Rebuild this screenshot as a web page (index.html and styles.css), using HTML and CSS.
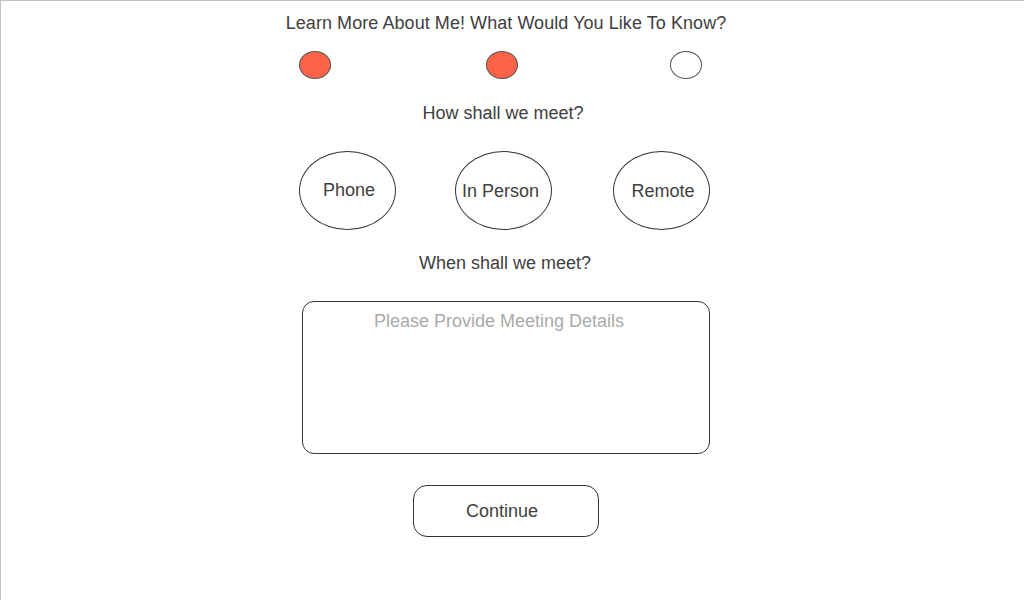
FILE: index.html
```html
<!DOCTYPE html>
<html>
<head>
<meta charset="utf-8">
<link rel="stylesheet" href="styles.css">
</head>
<body>
<div class="page">
  <div class="content">
    <h1 class="title">Learn More About Me! What Would You Like To Know?</h1>
    <div class="dots">
      <span class="dot dot-on"></span>
      <span class="dot dot-on dot-2"></span>
      <span class="dot dot-3"></span>
    </div>
    <p class="label label-how">How shall we meet?</p>
    <div class="options">
      <button class="option opt-phone">Phone</button>
      <button class="option opt-person">In Person</button>
      <button class="option opt-remote">Remote</button>
    </div>
    <p class="label label-when">When shall we meet?</p>
    <textarea class="details" placeholder="Please Provide Meeting Details"></textarea>
    <button class="continue">Continue</button>
  </div>
</div>
</body>
</html>
```
FILE: styles.css
```css
* { box-sizing: border-box; }
html, body { margin: 0; padding: 0; background: #fff; }
body { font-family: "Liberation Sans", Arial, sans-serif; color: #404040; }
.page {
  width: 1024px;
  height: 600px;
  border-top: 1px solid #c4c4c4;
  border-left: 1px solid #c4c4c4;
  overflow: hidden;
}
.content {
  width: 412px;
  margin-left: 298px;
  display: flex;
  flex-direction: column;
  align-items: stretch;
}
.title {
  margin: 11px -30px 0 -28px;
  font-size: 18px;
  font-weight: normal;
  line-height: 22px;
  letter-spacing: 0.06px;
  text-align: center;
  white-space: nowrap;
}
.dots {
  display: flex;
  margin-top: 17px;
  height: 28px;
}
.dot {
  width: 32px;
  height: 28px;
  border: 1px solid #555;
  border-radius: 50%;
  background: #fff;
}
.dot-on { background: #ff6347; }
.dot-2 { margin-left: 155px; }
.dot-3 { margin-left: 152px; }
.label {
  margin: 0;
  font-size: 18px;
  line-height: 22px;
  text-align: center;
}
.label-how { margin-top: 23px; padding-right: 4px; }
.label-when { margin-top: 22px; padding-left: 0; }
.options {
  display: flex;
  gap: 59px;
  margin-top: 27px;
}
.option {
  width: 97px;
  height: 79px;
  border: 1px solid #333;
  border-radius: 50%;
  background: #fff;
  font-family: "Liberation Sans", Arial, sans-serif;
  font-size: 18px;
  color: #404040;
  padding: 2px 0 0 0;
}
.opt-phone { padding-top: 0; padding-left: 3px; }
.opt-person { padding-right: 6px; }
.opt-remote { margin-left: 2px; padding-left: 3px; }
.details {
  margin-top: 27px;
  margin-left: 3px;
  width: 408px;
  height: 153px;
  border: 1px solid #333;
  border-radius: 12px;
  padding: 8px 14px 0 0;
  font-family: "Liberation Sans", Arial, sans-serif;
  font-size: 18px;
  line-height: 22px;
  text-align: center;
  resize: none;
  outline: none;
  background: #fff;
}
.details::placeholder { color: #aaa; opacity: 1; }
.continue {
  align-self: flex-start;
  margin-top: 31px;
  margin-left: 114px;
  width: 186px;
  height: 52px;
  border: 1px solid #333;
  border-radius: 14px;
  background: #fff;
  font-family: "Liberation Sans", Arial, sans-serif;
  font-size: 18px;
  color: #404040;
  padding: 0 8px 0 0;
}
```
